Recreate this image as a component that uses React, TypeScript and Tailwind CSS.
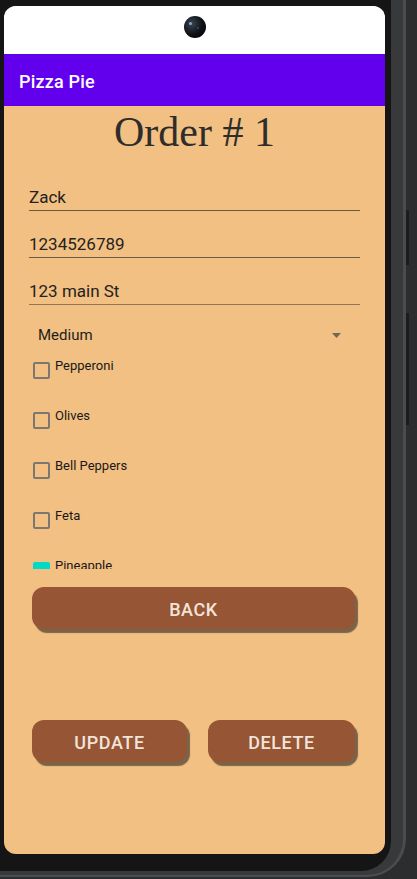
import React from "react";

const toppings = [
  { name: "Pepperoni", checked: false },
  { name: "Olives", checked: false },
  { name: "Bell Peppers", checked: false },
  { name: "Feta", checked: false },
  { name: "Pineapple", checked: true },
];

function Field({ value, first, line }: { value: string; first?: boolean; line: string }) {
  return (
    <div className={first ? "pt-[31px]" : "pt-[23px]"}>
      <div className="text-[17px] leading-[20px] text-[#242220] pb-[3px]">{value}</div>
      <div className={`h-[1px] ${line}`} />
    </div>
  );
}

const btn =
  "h-[42px] pt-[3px] rounded-[12px] bg-[#965534] shadow-[3px_4px_1px_#7a6346] text-[#f2e4d8] text-[18px] font-medium tracking-[0.6px]";

export default function App() {
  return (
    <div className="relative w-[417px] h-[879px] bg-[#2c2d2f] overflow-hidden" style={{ fontFamily: "Roboto, 'Noto Sans', sans-serif" }}>
      <div className="w-[406px] h-[877px] bg-[#4b4c4e] rounded-br-[38px] pr-[3px] pb-[2px]">
        <div className="w-full h-full bg-[#38393b] rounded-br-[36px] pr-[12px] pb-[4px]">
          <div className="w-full h-full bg-[#151515] rounded-br-[30px] pl-[4px] pt-[6px] pb-[16px]">
            {/* Screen */}
            <div className="w-[381px] h-[848px] rounded-[12px] overflow-hidden flex flex-col bg-[#F2C083]">
              {/* Status bar */}
              <div className="h-[48px] bg-white flex justify-center">
                <div className="mt-[10px] w-[22px] h-[22px] rounded-full bg-[radial-gradient(circle_at_35%_35%,#3a4450_0%,#0c0e12_55%,#050505_100%)] relative">
                  <div className="absolute left-[5px] top-[6px] w-[3px] h-[3px] rounded-full bg-[#8fa6b8]" />
                  <div className="absolute left-[13px] top-[11px] w-[2px] h-[2px] rounded-full bg-[#2b4d80]" />
                </div>
              </div>
              {/* App bar */}
              <div className="h-[52px] bg-[#6200EE] flex items-center pl-[15px] pt-[2px]">
                <span className="text-white text-[18px] font-medium tracking-[0.2px]">Pizza Pie</span>
              </div>
              {/* Content */}
              <div className="flex-1 px-[25px]">
                <div
                  className="mt-[2px] text-center text-[42px] leading-[48px] text-[#2e2d2b]"
                  style={{ fontFamily: "'Liberation Serif', 'DejaVu Serif', serif" }}
                >
                  Order # 1
                </div>
                <Field value="Zack" first line="bg-[#6e5b44]" />
                <Field value="1234526789" line="bg-[#6e5b44]" />
                <Field value="123 main St" line="bg-[#8f7552]" />
                {/* Spinner */}
                <div className="pt-[21px] flex items-center justify-between pl-[9px] pr-[19px]">
                  <span className="text-[15px] leading-[18px] text-[#1f1d1b]">Medium</span>
                  <svg width="9" height="5" viewBox="0 0 9 5">
                    <path d="M0 0 L9 0 L4.5 5 Z" fill="#6f6558" />
                  </svg>
                </div>
                {/* Checkbox list */}
                <div className="h-[225px] overflow-hidden">
                  {toppings.map((t) => (
                    <div key={t.name} className="h-[50px] flex items-start pl-[4px]">
                      <div
                        className={
                          t.checked
                            ? "mt-[18px] w-[17px] h-[17px] rounded-[2px] bg-[#03DAC5]"
                            : "mt-[18px] w-[17px] h-[17px] rounded-[2px] border-2 border-[#7c7770]"
                        }
                      />
                      <span className="ml-[5px] mt-[14px] text-[13px] leading-[16px] text-[#1a1816]">{t.name}</span>
                    </div>
                  ))}
                </div>
                {/* Back */}
                <div className="mt-[18px] ml-[3px] mr-[5px]">
                  <button className={`w-full ${btn}`}>BACK</button>
                </div>
                {/* Update / Delete */}
                <div className="mt-[91px] ml-[3px] flex gap-[21px]">
                  <button className={`w-[155px] ${btn}`}>UPDATE</button>
                  <button className={`w-[147px] ${btn}`}>DELETE</button>
                </div>
              </div>
            </div>
          </div>
        </div>
      </div>
      {/* side buttons */}
      <div className="absolute left-[406px] top-[210px] w-[3px] h-[55px] bg-[#1c1c1c]" />
      <div className="absolute left-[406px] top-[313px] w-[3px] h-[112px] bg-[#1c1c1c]" />
    </div>
  );
}
